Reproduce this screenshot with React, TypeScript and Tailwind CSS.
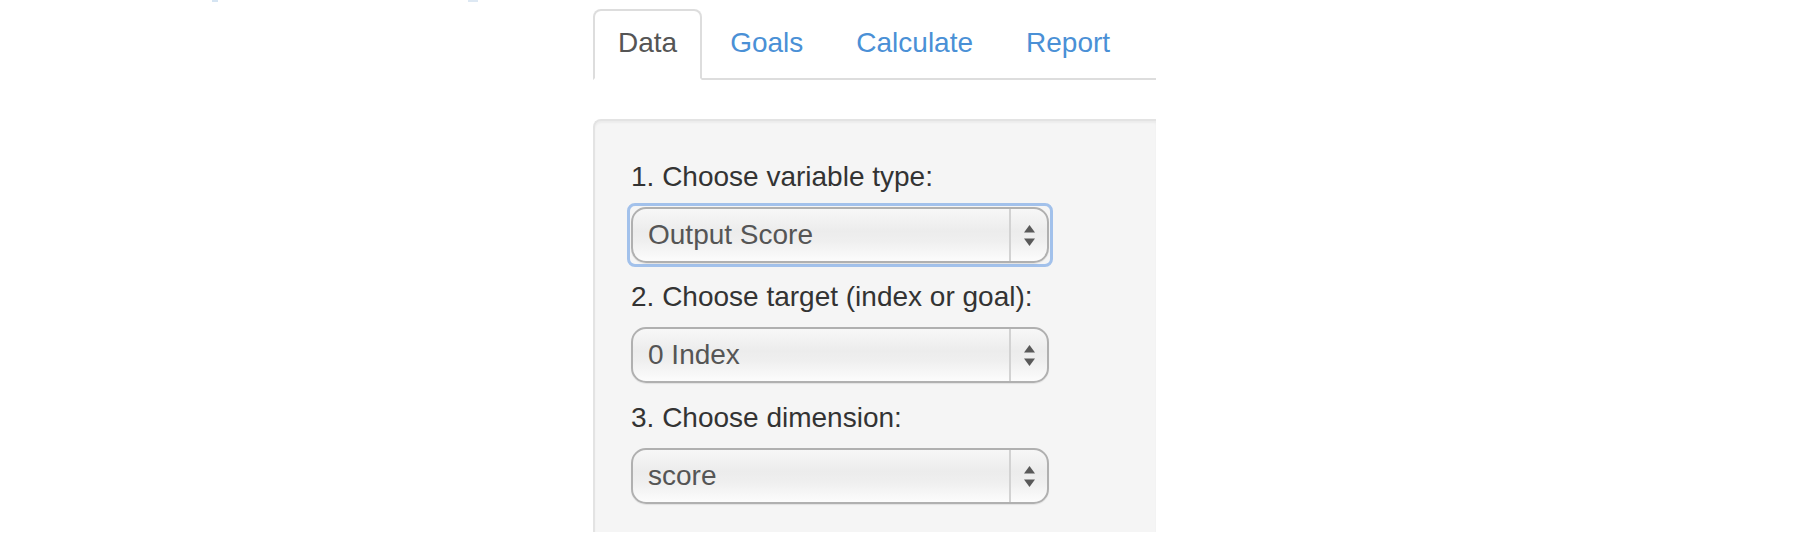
import React, { FC } from 'react';

const tabs = ['Data', 'Goals', 'Calculate', 'Report'];

interface SelectBoxProps {
  value: string;
}

const SelectBox: FC<SelectBoxProps> = ({ value }) => (
  <div className="flex h-[56px] w-[418px] rounded-[15px] border-2 border-[#b0b0b0] bg-[linear-gradient(180deg,#f7f7f7_0%,#ececec_42%,#efefef_62%,#fcfcfc_100%)] shadow-[0_1px_1px_rgba(0,0,0,0.08)]">
    <div className="flex flex-1 items-center pl-[15px] text-[28px] text-[#555]">
      {value}
    </div>
    <div className="flex w-[38px] items-center justify-center border-l-2 border-[#d2d2d2]">
      <svg width="11" height="21" viewBox="0 0 11 21">
        <path d="M5.5 0 L11 7.5 L0 7.5 Z" fill="#595959" />
        <path d="M0 13.5 L11 13.5 L5.5 21 Z" fill="#595959" />
      </svg>
    </div>
  </div>
);

const App: FC = () => {
  return (
    <div className="min-h-[545px] w-[1805px] bg-white font-['Liberation_Sans',Arial,sans-serif]">
      {/* descenders of the heading that is cut off above */}
      <div className="flex h-[2px]">
        <span className="ml-[212px] h-[2px] w-[6px] bg-[#d5e4f2]" />
        <span className="ml-[250px] h-[2px] w-[10px] bg-[#dde8f3]" />
      </div>

      <div className="ml-[593px] w-[563px]">
        <ul className="mt-[7px] flex border-b-2 border-[#dddddd]">
          {tabs.map((tab, i) => (
            <li key={tab} className="-mb-[2px] mr-[3px]">
              {i === 0 ? (
                <span className="block rounded-t-[8px] border-2 border-[#dddddd] border-b-transparent bg-white px-[23px] pt-[12px] pb-[15px] text-[28px] leading-[40px] text-[#555]">
                  {tab}
                </span>
              ) : (
                <span className="block border-2 border-transparent px-[23px] pt-[12px] pb-[15px] text-[28px] leading-[40px] text-[#4a90d6]">
                  {tab}
                </span>
              )}
            </li>
          ))}
        </ul>

        <div className="mt-[39px] h-[413px] overflow-hidden rounded-tl-[8px] border-t-2 border-l-2 border-[#e3e3e3] bg-[#f5f5f5] pt-[36px] pl-[36px] shadow-[inset_0_2px_2px_rgba(0,0,0,0.04)]">
          <label className="mb-[6px] block text-[28px] leading-[40px] text-[#333]">
            1. Choose variable type:
          </label>
          <div className="-ml-[4px] mb-[10px] w-fit rounded-[8px] border-[3px] border-[#a2c1eb] p-px">
            <SelectBox value="Output Score" />
          </div>

          <label className="mb-[10px] block text-[28px] leading-[40px] text-[#333]">
            2. Choose target (index or goal):
          </label>
          <div className="mb-[15px]">
            <SelectBox value="0 Index" />
          </div>

          <label className="mb-[10px] block text-[28px] leading-[40px] text-[#333]">
            3. Choose dimension:
          </label>
          <SelectBox value="score" />
        </div>
      </div>
    </div>
  );
};

export default App;
